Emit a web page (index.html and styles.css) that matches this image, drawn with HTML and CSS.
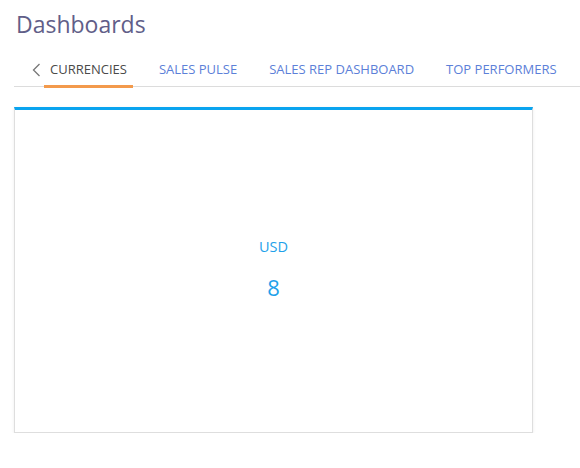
FILE: index.html
```html
<!DOCTYPE html>
<html>
<head>
<meta charset="utf-8">
<link rel="stylesheet" href="styles.css">
</head>
<body>
<div class="page">
  <h1 class="title">Dashboards</h1>
  <div class="tabs">
    <span class="chev"><svg width="9" height="14" viewBox="0 0 9 14"><path d="M7.5 1 L1.5 7 L7.5 13" fill="none" stroke="#777" stroke-width="1.3"/></svg></span>
    <a class="tab active">CURRENCIES</a>
    <a class="tab">SALES PULSE</a>
    <a class="tab">SALES REP DASHBOARD</a>
    <a class="tab">TOP PERFORMERS</a>
  </div>
  <div class="card">
    <div class="label">USD</div>
    <div class="value">8</div>
  </div>
</div>
</body>
</html>
```
FILE: styles.css
```css
html, body { margin: 0; padding: 0; background: #fff; }
body { font-family: "Open Sans", "Liberation Sans", sans-serif; }
.page { padding: 0 0 0 14px; }
.title {
  margin: 0;
  padding: 7px 0 0 2px;
  font-size: 23px;
  font-weight: 400;
  color: #615e88;
  line-height: 34px;
}
.tabs {
  display: flex;
  align-items: flex-end;
  height: 46px;
  border-bottom: 1px solid #dcdcdc;
  box-sizing: border-box;
}
.chev { flex-shrink: 0; width: 30px; display: flex; justify-content: flex-end; padding-right: 3px; box-sizing: border-box; height: 22px; align-items: flex-start; padding-top: 2px; margin-bottom: 3px; }
.tab {
  flex-shrink: 0;
  white-space: nowrap;
  font-size: 13px;
  color: #5c80d8;
  padding: 0 6px 7px;
  margin-right: 20px;
  line-height: 18px;
  border-bottom: 3px solid transparent;
  margin-bottom: -2px;
}
.tab:last-child { margin-right: 0; }
.tab.active { color: #4a4a4a; border-bottom-color: #f39a4c; }
.card {
  margin-top: 20px;
  width: 519px;
  height: 326px;
  box-sizing: border-box;
  border: 1px solid #dedede;
  border-top: 3px solid #0aa4ef;
  box-shadow: 0 1px 3px rgba(0,0,0,0.08);
  display: flex;
  flex-direction: column;
  align-items: center;
  justify-content: center;
  color: #1ea1ea;
  padding-bottom: 4px;
}
.label { font-size: 14.5px; line-height: 20px; }
.value { font-size: 22px; line-height: 30px; margin-top: 15px; }
```
